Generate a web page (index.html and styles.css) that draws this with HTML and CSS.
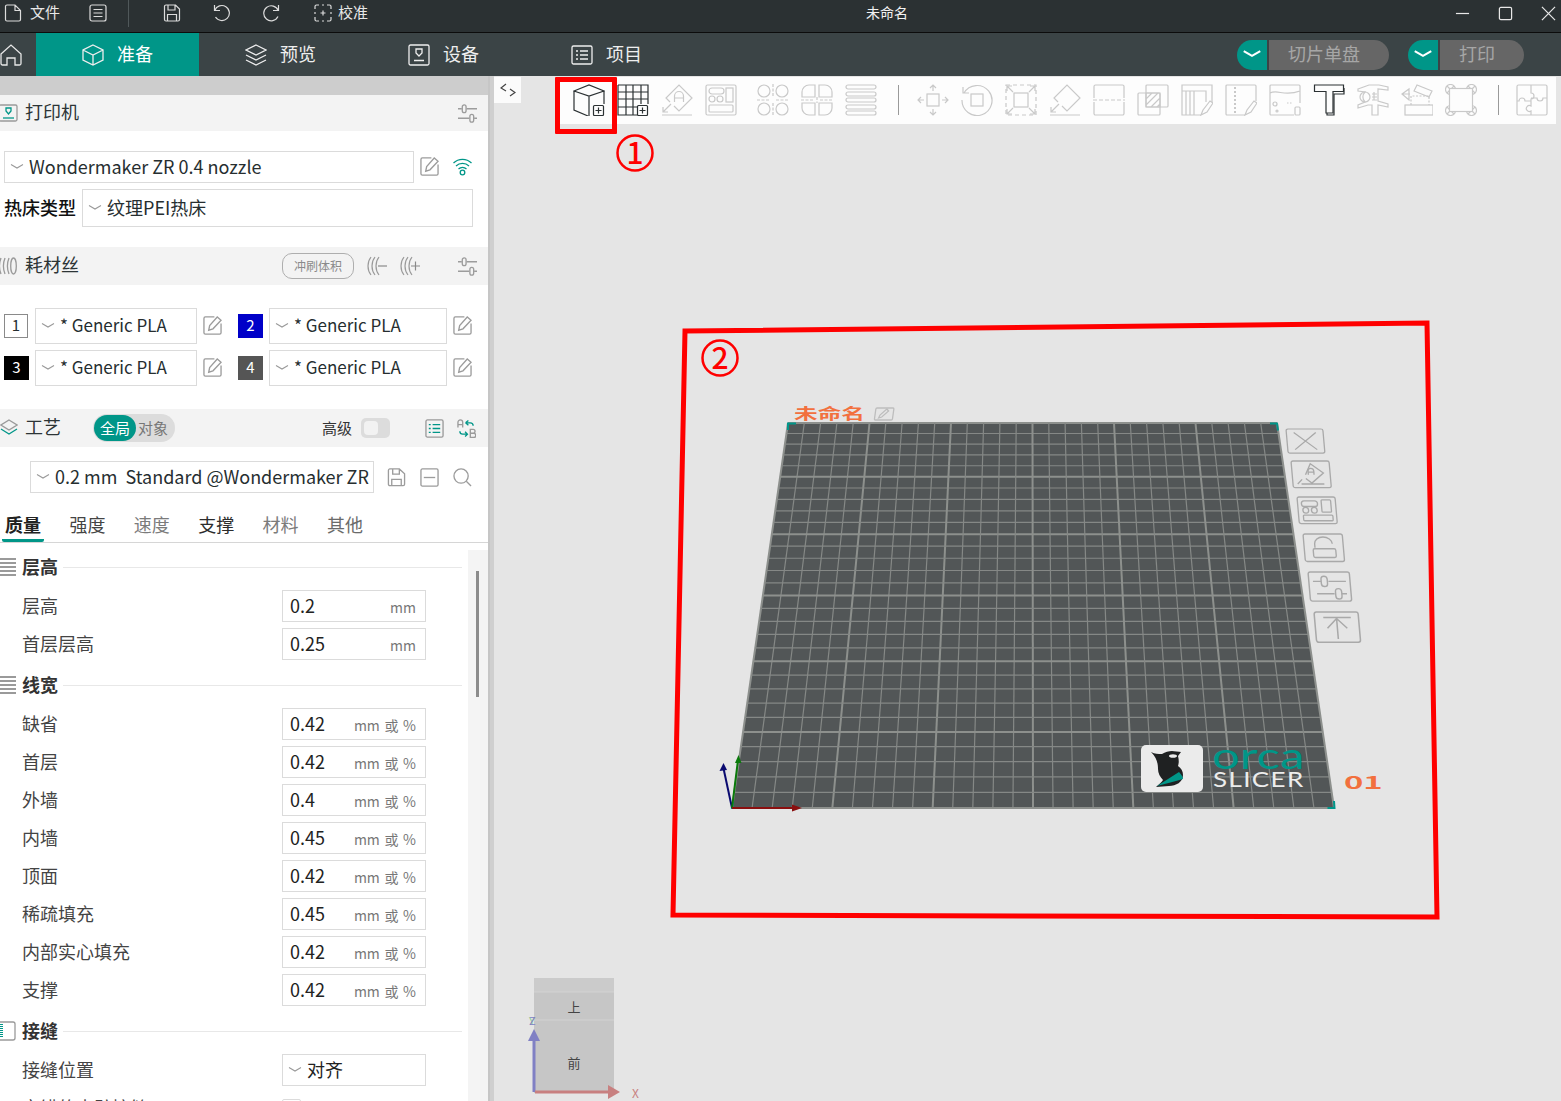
FILE: index.html
```html
<!DOCTYPE html>
<html lang="zh">
<head>
<meta charset="utf-8">
<title>未命名</title>
<link rel="stylesheet" href="styles.css">
</head>
<body>
<svg class="defs" width="0" height="0" aria-hidden="true">
  <defs>
    <symbol id="i-edit" viewBox="0 0 20 20"><path d="M12 1H2.500A1.500 1.500 0 0 0 1 2.500v15A1.500 1.500 0 0 0 2.500 19h15a1.500 1.500 0 0 0 1.500-1.500V8" /><path d="M6 15l1-5 8-9 4 3.500-8.500 9z"/></symbol>
    <symbol id="i-sliders" viewBox="0 0 20 20"><path d="M0 5h4M9 5h11M0 15h12M17 15h3"/><rect x="4.500" y="1" width="4" height="8" rx="2"/><rect x="12.500" y="11" width="4" height="8" rx="2"/></symbol>
    <symbol id="i-chev" viewBox="0 0 14 8"><path d="M1 1.500 7 5l6-3.500"/></symbol>
    <symbol id="t-cube" viewBox="0 0 32 32"><path d="M1 7 16 1l15 6-15 5zM1 7v19l14 6M16 12v20M31 7v13"/><rect x="20.500" y="21.500" width="10" height="10" rx="1"/><path d="M25.500 23.500v6M22.500 26.500h6"/></symbol>
    <symbol id="t-grid" viewBox="0 0 32 32"><path d="M1 1h30v19M20 31H1V1M1 8h30M1 15h30M1 23h19M9 1v30M16 1v30M24 1v19"/><rect x="20.500" y="21.500" width="10" height="10" rx="1"/><path d="M25.500 23.500v6M22.500 26.500h6"/></symbol>
    <symbol id="t-orient" viewBox="0 0 32 32"><path d="M9 18 5 14 18 1l13 13-13 13-5-5M1 31h30M2 28l8-8M2 23v5h5"/><path d="M13.500 18v-6a4.500 4.500 0 0 1 9 0v6M13.500 14h9"/></symbol>
    <symbol id="t-arrange" viewBox="0 0 32 32"><rect x="1" y="1" width="30" height="30" rx="1.500"/><rect x="4" y="4" width="15" height="6" rx="3"/><rect x="21" y="4" width="7" height="14"/><circle cx="7" cy="15" r="3"/><circle cx="15" cy="15" r="3"/><rect x="4" y="21" width="24" height="7" rx="1"/></symbol>
    <symbol id="t-split" viewBox="0 0 32 32"><circle cx="7" cy="7" r="6"/><circle cx="25" cy="7" r="6"/><circle cx="7" cy="25" r="6"/><circle cx="25" cy="25" r="6"/><path d="M16 0v13M16 19v13M0 16h13M19 16h13" stroke-dasharray="3 1.500"/></symbol>
    <symbol id="t-split2" viewBox="0 0 32 32"><path d="M14 1H8a7 7 0 0 0-7 7v5h13zM18 1h6a7 7 0 0 1 7 7v5H18zM14 31H8a7 7 0 0 1-7-7v-5h13zM18 31h6a7 7 0 0 0 7-7v-5H18z"/><path d="M0 16h13M19 16h13M16 13v6" stroke-dasharray="3 1.500"/></symbol>
    <symbol id="t-layers" viewBox="0 0 32 32"><rect x="1" y="1" width="30" height="4" rx="2"/><rect x="1" y="8" width="30" height="4" rx="2"/><rect x="1" y="14" width="30" height="4" rx="2"/><rect x="1" y="21" width="30" height="4" rx="2"/><rect x="1" y="27" width="30" height="4" rx="2"/></symbol>
    <symbol id="t-move" viewBox="0 0 32 32"><rect x="10" y="10" width="12" height="12"/><path d="M16 1v6M13 4l3-3 3 3M16 25v6M13 28l3 3 3-3M1 16h6M4 13l-3 3 3 3M25 16h6M28 13l3 3-3 3"/></symbol>
    <symbol id="t-rotate" viewBox="0 0 32 32"><rect x="10" y="10" width="12" height="12"/><path d="M3 9A15 15 0 1 1 1 16M2 3v6h6" /></symbol>
    <symbol id="t-scale" viewBox="0 0 32 32"><rect x="9" y="9" width="14" height="14"/><path d="M1 1h30v30H1z" stroke-dasharray="4 3"/><path d="M2 2l6 6M2 7V2h5M30 2l-6 6M25 2h5v5M2 30l6-6M2 25v5h5M30 30l-6-6M30 25v5h-5"/></symbol>
    <symbol id="t-flat" viewBox="0 0 32 32"><path d="M9 18 5 14 18 1l13 13-13 13-5-5M1 31h30M2 28l8-8M2 23v5h5"/></symbol>
    <symbol id="t-cut" viewBox="0 0 32 32"><path d="M1 14V2.500A1.500 1.500 0 0 1 2.500 1h27A1.500 1.500 0 0 1 31 2.500V14M1 18v11.500A1.500 1.500 0 0 0 2.500 31h27a1.500 1.500 0 0 0 1.500-1.500V18"/><path d="M0 16h32" stroke-dasharray="4 2"/></symbol>
    <symbol id="t-bool" viewBox="0 0 32 32"><rect x="1" y="9" width="22" height="22" rx="1"/><rect x="9" y="1" width="22" height="22" rx="1"/><path d="M9 23V9h14v14zM9 15l6-6M9 21 21 9M14 23l9-9M20 23l3-3"/></symbol>
    <symbol id="t-support" viewBox="0 0 32 32"><path d="M20 31H1V1h30v17M1 7h24v11M5 7v24M9 7v24M13 7v24"/><path d="M20 31l2-5 7-9 3 2-6 9-6 3z"/></symbol>
    <symbol id="t-seam" viewBox="0 0 32 32"><path d="M20 31H2a1 1 0 0 1-1-1V2a1 1 0 0 1 1-1h28a1 1 0 0 1 1 1v15"/><path d="M10 3v26" stroke-dasharray="2 2" stroke-width="2"/><path d="M20 31l2-5 7-9 3 2-6 9-6 3z"/></symbol>
    <symbol id="t-fuzzy" viewBox="0 0 32 32"><path d="M25 31H2a1 1 0 0 1-1-1V2a1 1 0 0 1 1-1h28a1 1 0 0 1 1 1v17M1 9c8-4 14 4 30-2"/><circle cx="6" cy="20" r="2"/><circle cx="8" cy="27" r="1"/><path d="M18 19h5" stroke-dasharray="1.500 1.500"/><rect x="26" y="23" width="5" height="8" rx="1"/></symbol>
    <symbol id="t-text" viewBox="0 0 32 32"><path d="M1.500 1h29v6.500H20V29h-7V7.500H1.500z"/><path d="M31 4v6H21v21h-7v-2"/></symbol>
    <symbol id="t-measure" viewBox="0 0 32 32"><path d="M1 5 12 1h10l9 2v3l-10-1v12l10 3v3l-10-2v10h-6V21H11L1 24v-3l7-3a7 7 0 0 1 0-10L1 7z"/><circle cx="8" cy="13" r="5"/><path d="M17 8v8M15 10h5M15 13h5M15 16h5"/></symbol>
    <symbol id="t-assembly" viewBox="0 0 32 32"><rect x="4" y="21" width="28" height="10"/><path d="M10 21v-9h18v9" stroke-dasharray="2 1.500"/><path d="M13 7 16 1l15 6-3 6zM1 10l7-5v11zM1 10l8 0"/></symbol>
    <symbol id="t-ears" viewBox="0 0 32 32"><circle cx="5.500" cy="5.500" r="5"/><circle cx="26.500" cy="5.500" r="5"/><circle cx="5.500" cy="26.500" r="5"/><circle cx="26.500" cy="26.500" r="5"/><path d="M2 2l7 7M9 2l-7 7M23 2l7 7M30 2l-7 7M2 23l7 7M9 23l-7 7M23 23l7 7M30 23l-7 7"/><rect x="4.500" y="4.500" width="23" height="23" fill="#fdfdfd"/></symbol>
    <symbol id="t-puzzle" viewBox="0 0 32 32"><rect x="1" y="1" width="30" height="30" rx="1.500"/><path d="M15 1v8a3 3 0 1 1 0 6v2H9a3 3 0 1 0-6 0H1M15 17v5a3 3 0 1 0 0 5v4M15 14h6a3 3 0 1 0 6 0h4"/></symbol>
  </defs>
</svg>

<div class="app">
  <header class="titlebar">
    <div class="tb-left">
      <svg class="tb-ic" viewBox="0 0 18 18"><path d="M1.500 2.500a1.500 1.500 0 0 1 1.500-1.500h8l5.500 5.500v9a1.500 1.500 0 0 1-1.500 1.500H3a1.500 1.500 0 0 1-1.500-1.500zM11 1v5.500h5.500"/></svg>
      <span class="tb-file">文件</span>
      <svg class="tb-ic tb-list" viewBox="0 0 18 18"><rect x="1" y="1" width="16" height="16" rx="2"/><path d="M4.500 5.500h9M4.500 9h9M4.500 12.500h9"/></svg>
      <span class="tb-sep"></span>
      <svg class="tb-ic tb-save" viewBox="0 0 18 18"><path d="M1.500 2.500A1.500 1.500 0 0 1 3 1h9.500l4 4v10.500A1.500 1.500 0 0 1 15 17H3a1.500 1.500 0 0 1-1.500-1.500zM5 1v5h7V1M4.500 17v-6.500h9V17"/></svg>
      <svg class="tb-ic tb-undo" viewBox="0 0 18 18"><path d="M2.500 1v5.500H8M2.800 6.500A7.500 7.500 0 1 1 3.500 13"/></svg>
      <svg class="tb-ic tb-redo" viewBox="0 0 18 18"><path d="M15.500 1v5.500H10M15.200 6.500A7.500 7.500 0 1 0 15 12.500"/></svg>
      <svg class="tb-ic tb-calib" viewBox="0 0 18 18"><path d="M5 1H2.500A1.500 1.500 0 0 0 1 2.500V5M13 1h2.500A1.500 1.500 0 0 1 17 2.500V5M5 17H2.500A1.500 1.500 0 0 1 1 15.500V13M13 17h2.500a1.500 1.500 0 0 0 1.500-1.500V13M8 1h2M8 17h2M1 8v2M17 8v2M9 6.500v5M6.500 9h5"/></svg>
      <span class="tb-calib-label">校准</span>
    </div>
    <div class="tb-title">未命名</div>
    <div class="tb-win">
      <svg class="win-ic" viewBox="0 0 16 16"><path d="M1 8h14"/></svg>
      <svg class="win-ic" viewBox="0 0 16 16"><rect x="1.500" y="1.500" width="13" height="13" rx="1.500"/></svg>
      <svg class="win-ic" viewBox="0 0 16 16"><path d="M1 1l14 14M15 1 1 15"/></svg>
    </div>
  </header>

  <nav class="tabbar">
    <svg class="home" viewBox="0 0 22 22"><path d="M1 10 11 1l10 9v9.500a1.500 1.500 0 0 1-1.500 1.500H15v-7H7v7H2.500A1.500 1.500 0 0 1 1 19.500z"/></svg>
    <div class="tab active">
      <svg class="tab-ic" viewBox="0 0 22 22"><path d="M11 1l10 5v10l-10 5-10-5V6zM1 6l10 5 10-5M11 11v10"/></svg><span>准备</span>
    </div>
    <div class="tab">
      <svg class="tab-ic" viewBox="0 0 22 22"><path d="M11 1l10 5-10 5L1 6zM1 11l10 5 10-5M1 16l10 5 10-5"/></svg><span>预览</span>
    </div>
    <div class="tab">
      <svg class="tab-ic" viewBox="0 0 22 22"><rect x="1" y="1" width="20" height="20" rx="1.500"/><path d="M6 16.500h10M8 5h6v4l-3 3-3-3z"/></svg><span>设备</span>
    </div>
    <div class="tab">
      <svg class="tab-ic" viewBox="0 0 22 22"><rect x="1" y="2" width="20" height="18" rx="1.500"/><path d="M5 7h2M9 7h8M5 11h2M9 11h8M5 15h2M9 15h8"/></svg><span>项目</span>
    </div>
    <div class="actions">
      <div class="act act-slice">
        <span class="act-drop"><svg viewBox="0 0 14 8"><path d="M1 1.500 7 5l6-3.500"/></svg></span>
        <span class="act-main">切片单盘</span>
      </div>
      <div class="act act-print">
        <span class="act-drop"><svg viewBox="0 0 14 8"><path d="M1 1.500 7 5l6-3.500"/></svg></span>
        <span class="act-main">打印</span>
      </div>
    </div>
  </nav>

  <main class="main">
    <aside class="sidebar">
      <div class="band"></div>

      <div class="head head-printer">
        <svg class="head-ic" viewBox="0 0 18 18"><rect x="-1" y="1" width="18" height="16" rx="1.500" class="gr"/><path d="M3 14h11" class="te"/><path d="M6 4h5v3l-2.500 3L6 7z" class="te"/></svg>
        <span class="head-t">打印机</span>
        <svg class="ic ic-right"><use href="#i-sliders"/></svg>
      </div>

      <div class="printer-body">
        <div class="printer-row">
          <div class="sel sel-printer"><svg class="chev"><use href="#i-chev"/></svg><span>Wondermaker ZR 0.4 nozzle</span></div>
          <svg class="ic"><use href="#i-edit"/></svg>
          <svg class="wifi" viewBox="0 0 20 20"><path d="M1 7a13 13 0 0 1 18 0M3.500 10a9.500 9.500 0 0 1 13 0M6 13a6 6 0 0 1 8 0"/><circle cx="10" cy="16.500" r="2.300"/></svg>
        </div>
        <div class="bed-row">
          <span class="bed-label">热床类型</span>
          <div class="sel sel-bed"><svg class="chev"><use href="#i-chev"/></svg><span>纹理PEI热床</span></div>
        </div>
      </div>

      <div class="head">
        <svg class="head-ic" viewBox="0 0 18 18"><path d="M1 1c-2 5-2 11 0 16M5 1c-2 5-2 11 0 16M9 1c-2 5-2 11 0 16" class="gr"/><ellipse cx="13.500" cy="9" rx="2.800" ry="8" class="gr"/></svg>
        <span class="head-t">耗材丝</span>
        <span class="flush">冲刷体积</span>
        <svg class="fil-ic" viewBox="0 0 20 20"><path d="M4 1C0 6 0 14 4 19M8 1C4 6 4 14 8 19M12 1C8 6 8 14 12 19" class="gr"/><path d="M11 10h9"/></svg>
        <svg class="fil-ic fil-ic2" viewBox="0 0 20 20"><path d="M4 1C0 6 0 14 4 19M8 1C4 6 4 14 8 19M12 1C8 6 8 14 12 19" class="gr"/><path d="M11 10h9M15.500 5.500v9"/></svg>
        <svg class="ic ic-right ic-right-f"><use href="#i-sliders"/></svg>
      </div>

      <div class="filaments">
        <div class="fil">
          <span class="num n1">1</span>
          <div class="sel sel-fil"><svg class="chev"><use href="#i-chev"/></svg><span>* Generic PLA</span></div>
          <svg class="ic"><use href="#i-edit"/></svg>
        </div>
        <div class="fil">
          <span class="num n2">2</span>
          <div class="sel sel-fil"><svg class="chev"><use href="#i-chev"/></svg><span>* Generic PLA</span></div>
          <svg class="ic"><use href="#i-edit"/></svg>
        </div>
        <div class="fil">
          <span class="num n3">3</span>
          <div class="sel sel-fil"><svg class="chev"><use href="#i-chev"/></svg><span>* Generic PLA</span></div>
          <svg class="ic"><use href="#i-edit"/></svg>
        </div>
        <div class="fil">
          <span class="num n4">4</span>
          <div class="sel sel-fil"><svg class="chev"><use href="#i-chev"/></svg><span>* Generic PLA</span></div>
          <svg class="ic"><use href="#i-edit"/></svg>
        </div>
      </div>

      <div class="head">
        <svg class="head-ic" viewBox="0 0 18 18"><path d="M9 1l8 5-8 5-8-5z" class="gr"/><path d="M1 10l8 5 8-5" class="te"/></svg>
        <span class="head-t">工艺</span>
        <div class="seg"><span class="seg-on">全局</span><span class="seg-off">对象</span></div>
        <span class="adv">高级</span>
        <span class="switch"><i></i></span>
        <svg class="ic ic-list" viewBox="0 0 20 20"><rect x="1" y="1" width="18" height="18" rx="1.500" class="gr"/><path d="M4 6h2M8 6h8M4 10h2M8 10h8M4 14h2M8 14h8" class="te"/></svg>
        <svg class="ic ic-ab" viewBox="0 0 20 20"><path d="M1 9V3.500a2.500 2.500 0 0 1 5 0V9M1 6h5M14 11h3a2 2 0 0 1 0 4h-3zM14 15h3.500a2.250 2.250 0 0 1 0 4.500H14z" class="gr"/><path d="M9 4l3-2.500M9 4l3 2.500M9 4h5a3 3 0 0 1 3 3M3 13a3 3 0 0 0 3 3h5M8.500 13.500 11 16l-2.500 2.500" class="te"/></svg>
      </div>

      <div class="preset-row">
        <div class="sel sel-preset"><svg class="chev chev-p"><use href="#i-chev"/></svg><span>0.2 mm&nbsp; Standard @Wondermaker ZR</span></div>
        <svg class="ic" viewBox="0 0 20 20"><path d="M1.500 2.500A1.500 1.500 0 0 1 3 1h10l5.500 5v11A1.500 1.500 0 0 1 17 18.500H3A1.500 1.500 0 0 1 1.500 17zM6 1v5.500h7V1M5 18.500V12h10v6.500"/></svg>
        <svg class="ic" viewBox="0 0 20 20"><rect x="1" y="1" width="18" height="18" rx="1.500"/><path d="M4 10h12"/></svg>
        <svg class="ic" viewBox="0 0 20 20"><circle cx="8.500" cy="8.500" r="7.500"/><path d="M14 14l5 5"/></svg>
      </div>

      <div class="tabs">
        <span class="ptab on">质量</span>
        <span class="ptab t2">强度</span>
        <span class="ptab t3">速度</span>
        <span class="ptab t4">支撑</span>
        <span class="ptab t3">材料</span>
        <span class="ptab t5">其他</span>
      </div>

      <div class="scroll">
        <div class="settings">
          <div class="sec">
            <svg class="sec-ic" viewBox="0 0 16 20"><path d="M0 2h16M0 6h16M0 10h16M0 14h16M0 18h16"/></svg>
            <span class="sec-t">层高</span><span class="sec-line"></span>
          </div>
          <div class="row"><span class="lbl">层高</span><div class="field"><b>0.2</b><i>mm</i></div></div>
          <div class="row"><span class="lbl">首层层高</span><div class="field"><b>0.25</b><i>mm</i></div></div>

          <div class="sec sec-next">
            <svg class="sec-ic" viewBox="0 0 16 20"><path d="M0 2h16M0 6h16M0 10h16M0 14h16M0 18h16"/></svg>
            <span class="sec-t">线宽</span><span class="sec-line"></span>
          </div>
          <div class="row"><span class="lbl">缺省</span><div class="field"><b>0.42</b><i>mm 或 %</i></div></div>
          <div class="row"><span class="lbl">首层</span><div class="field"><b>0.42</b><i>mm 或 %</i></div></div>
          <div class="row"><span class="lbl">外墙</span><div class="field"><b>0.4</b><i>mm 或 %</i></div></div>
          <div class="row"><span class="lbl">内墙</span><div class="field"><b>0.45</b><i>mm 或 %</i></div></div>
          <div class="row"><span class="lbl">顶面</span><div class="field"><b>0.42</b><i>mm 或 %</i></div></div>
          <div class="row"><span class="lbl">稀疏填充</span><div class="field"><b>0.45</b><i>mm 或 %</i></div></div>
          <div class="row"><span class="lbl">内部实心填充</span><div class="field"><b>0.42</b><i>mm 或 %</i></div></div>
          <div class="row"><span class="lbl">支撑</span><div class="field"><b>0.42</b><i>mm 或 %</i></div></div>

          <div class="sec sec-next">
            <svg class="sec-ic sec-ic-seam" viewBox="0 0 16 20"><rect x="-2" y="1" width="17" height="18" rx="2"/><path d="M1 3v14" class="te-d"/></svg>
            <span class="sec-t">接缝</span><span class="sec-line"></span>
          </div>
          <div class="row"><span class="lbl">接缝位置</span><div class="field field-sel"><svg class="chev"><use href="#i-chev"/></svg><b>对齐</b></div></div>
          <div class="row"><span class="lbl">交错的内壁接缝</span><span class="check"></span></div>
        </div>
        <div class="track"><span class="thumb"></span></div>
      </div>
    </aside>

    <div class="divider"></div>

    <section class="viewport">
      <svg class="scene" viewBox="0 0 1067 1025" width="1067" height="1025">
        <g transform="translate(-494 -76)">
          <!-- build plate -->
          <polygon points="788,423 1277,423 1334,808 732,808" fill="#525657"/>
          <g id="bed-grid"></g>
          <path d="M788 430v-6.500h8M1270 423.500h7l1 7M1334 801l.5 7h-7M739 808h-7l1-6" fill="none" stroke="#00968a" stroke-width="2"/>

          <text class="plate-name" transform="translate(794 419) scale(1.030 .62)">未命名</text>
          <g transform="translate(875 408) skewX(-8)" fill="none" stroke="#bdbdbd" stroke-width="1.300">
            <rect x="1" y="0" width="18" height="12" rx="1"/><path d="M5 10l1-3 6-6 2 2-6 6z"/>
          </g>

          <!-- plate side buttons -->
          <g class="pbtn" transform="translate(1286 429) skewX(5) scale(.92 .86)"><rect x="0" y="0" width="40" height="28" rx="2"/><path d="M8 4l24 20M32 4 8 24"/></g>
          <g class="pbtn" transform="translate(1291 461) skewX(5) scale(.95 .92)"><rect x="0" y="0" width="40" height="29" rx="2"/><path d="M14 15 20 3l13 10-13 11-6-5M9 25h24M5 25l5-5"/><path d="M17 15v-4a3 3 0 0 1 6 0v4M17 12h6"/></g>
          <g class="pbtn" transform="translate(1297 497) skewX(5) scale(.95 .95)"><rect x="0" y="0" width="40" height="28" rx="2"/><rect x="4" y="4" width="17" height="6" rx="3"/><rect x="25" y="3" width="10" height="13" rx="1"/><circle cx="8" cy="14" r="3"/><circle cx="17" cy="14" r="3"/><rect x="5" y="19" width="31" height="6" rx="1"/></g>
          <g class="pbtn" transform="translate(1303 534) skewX(5) scale(.98 .98)"><rect x="0" y="0" width="40" height="28" rx="2"/><path d="M11 14V10a9 7 0 0 1 18 0"/><rect x="9" y="15" width="23" height="9" rx="1.500"/></g>
          <g class="pbtn" transform="translate(1308 572) skewX(5) scale(1.030 1.040)"><rect x="0" y="0" width="40" height="28" rx="2"/><path d="M4 9h8M19 9h17M7 21h17M31 21h5"/><rect x="12" y="4" width="6" height="10" rx="3"/><rect x="25" y="16" width="6" height="10" rx="3"/></g>
          <g class="pbtn" transform="translate(1314 612) skewX(5) scale(1.100 1.080)"><rect x="0" y="0" width="40" height="28" rx="2"/><path d="M8 5h25M20 25V6M11 15 20 6l9 9"/></g>

          <!-- logo on plate -->
          <rect x="1141" y="745" width="62" height="47" rx="5" fill="#ebebeb"/>
          <path d="M1151 752c4 2 7 2 11 2 3-2 7-3 10-3 2 0 7 1 9 1l-3 4c1 4 1 7 0 10 3 2 5 5 5 9 0 7-7 11-14 11l-13 1c3-3 6-5 7-7-3-3-5-7-5-11 0-5-1-11-7-17z" fill="#1f2122"/>
          <path d="M1157 786l22-14c2 2 4 5 4 7-8 2-17 5-26 7z" fill="#009688"/>
          <ellipse cx="1173" cy="756" rx="4" ry="1.800" fill="#ebebeb"/>
          <text class="logo-orca" transform="translate(1212 769) scale(1.750 1.300)">orca</text>
          <text class="logo-slicer" transform="translate(1213 787) scale(1.370 1.100)">SLICER</text>
          <text class="plate-num" transform="translate(1344 789) scale(2.050 1.050)">01</text>

          <!-- world axes -->
          <path d="M732 808 723 766" stroke="#0a0a70" stroke-width="2" fill="none"/>
          <path d="M719.500 771 723.500 763l3.500 7z" fill="#0a0a70"/>
          <path d="M732 808 738 760" stroke="#0a7a0a" stroke-width="2" fill="none"/>
          <path d="M735 763l3.500-8 3 8z" fill="#0a7a0a"/>
          <path d="M732 808H795" stroke="#8a0f0f" stroke-width="2" fill="none"/>
          <path d="M792 804.500 802 808l-10 3.500z" fill="#8a0f0f"/>

          <!-- view cube -->
          <rect x="534" y="978" width="80" height="115" fill="#c6c6c6"/>
          <rect x="534" y="978" width="80" height="14" fill="#cbcbcb"/>
          <path d="M534 992h80M534 1020h80" stroke="#d2d2d2" fill="none"/>
          <text class="cube-t" x="574" y="1012">上</text>
          <text class="cube-t" x="574" y="1068">前</text>
          <path d="M534 1092V1040" stroke="#8080c4" stroke-width="3" fill="none"/>
          <path d="M528 1041l6-12 6 12z" fill="#8080c4"/>
          <path d="M535 1092h75" stroke="#c88080" stroke-width="3" fill="none"/>
          <path d="M608 1085l12 7-12 7z" fill="#c88080"/>
          <text class="axis-y" x="529" y="1025">Y</text>
          <text class="axis-z" x="529" y="1025">Z</text>
          <text class="axis-x" x="632" y="1098">X</text>

          <!-- annotation frames -->
          <polygon points="685,331 1427,323 1437,917 673,915" fill="none" stroke="#f00" stroke-width="5"/>
          <circle cx="635" cy="153" r="17.500" class="mark-c"/>
          <text class="mark-t" x="635" y="164">1</text>
          <circle cx="720" cy="358" r="17.500" class="mark-c"/>
          <text class="mark-t" x="720" y="369">2</text>
        </g>
      </svg>

      <button class="collapse" type="button"><svg viewBox="0 0 16 14"><path d="M6 1 1 5l5 3M10 6l5 3.500L10 13"/></svg></button>

      <div class="toolbar">
        <svg class="tool on"><use href="#t-cube"/></svg>
        <svg class="tool on"><use href="#t-grid"/></svg>
        <svg class="tool"><use href="#t-orient"/></svg>
        <svg class="tool"><use href="#t-arrange"/></svg>
        <svg class="tool tool-g"><use href="#t-split"/></svg>
        <svg class="tool"><use href="#t-split2"/></svg>
        <svg class="tool"><use href="#t-layers"/></svg>
        <span class="tsep"></span>
        <svg class="tool"><use href="#t-move"/></svg>
        <svg class="tool"><use href="#t-rotate"/></svg>
        <svg class="tool"><use href="#t-scale"/></svg>
        <svg class="tool"><use href="#t-flat"/></svg>
        <svg class="tool"><use href="#t-cut"/></svg>
        <svg class="tool"><use href="#t-bool"/></svg>
        <svg class="tool"><use href="#t-support"/></svg>
        <svg class="tool"><use href="#t-seam"/></svg>
        <svg class="tool"><use href="#t-fuzzy"/></svg>
        <svg class="tool on"><use href="#t-text"/></svg>
        <svg class="tool"><use href="#t-measure"/></svg>
        <svg class="tool"><use href="#t-assembly"/></svg>
        <svg class="tool"><use href="#t-ears"/></svg>
        <span class="tsep tsep2"></span>
        <svg class="tool"><use href="#t-puzzle"/></svg>
      </div>

      <div class="red-box"></div>
    </section>
  </main>
</div>
<script src="grid.js"></script>
</body>
</html>
```

FILE: styles.css
```css
* { box-sizing: border-box; }
html, body { margin: 0; padding: 0; height: 100%; overflow: hidden; }
body {
  font-family: "Noto Sans CJK SC", "Noto Sans", sans-serif;
  color: #262e30;
  background: #fff;
}
.defs { position: absolute; }
svg { display: block; flex: none; }
.app { width: 1561px; height: 1101px; display: flex; flex-direction: column; }

/* title bar */
.titlebar {
  height: 33px; flex: none; display: flex; align-items: center; position: relative; padding-bottom: 6px;
  background: #2b3133; border-bottom: 1px solid #0c0c0c; color: #e8e8e8;
}
.tb-left { display: flex; align-items: center; padding-left: 4px; }
.tb-ic { width: 18px; height: 18px; fill: none; stroke: #dcdcdc; stroke-width: 1.200; }
.tb-file { font-size: 15px; margin-left: 8px; line-height: 20px; padding-bottom: 2px; }
.tb-list { margin-left: 29px; }
.tb-sep { width: 1px; height: 28px; background: #50585a; margin-left: 21px; }
.tb-save { margin-left: 34px; }
.tb-undo { margin-left: 31px; }
.tb-redo { margin-left: 33px; }
.tb-calib { margin-left: 33px; }
.tb-calib-label { font-size: 15px; margin-left: 6px; line-height: 20px; padding-bottom: 2px; }
.tb-title { position: absolute; left: 866px; top: 2px; font-size: 14px; line-height: 20px; color: #f2f2f2; }
.tb-win { margin-left: auto; display: flex; gap: 28px; padding-right: 5px; }
.win-ic { width: 15px; height: 15px; fill: none; stroke: #e8e8e8; stroke-width: 1.300; }

/* main tabs */
.tabbar { height: 43px; flex: none; display: flex; align-items: center; background: #3b4446; color: #eee; }
.home { width: 22px; height: 22px; margin: 0 14px 0 0; fill: none; stroke: #e8e8e8; stroke-width: 1.300; }
.tab { width: 163px; height: 43px; display: flex; align-items: center; justify-content: center; gap: 13px; font-size: 18px; }
.tab span { padding-bottom: 4px; }
.tab.active { background: #009688; color: #fff; }
.tab-ic { width: 22px; height: 22px; fill: none; stroke: #eee; stroke-width: 1.300; }
.actions { margin-left: auto; display: flex; gap: 19px; padding-right: 37px; }
.act { display: flex; height: 30px; font-size: 18px; color: #a6a6a6; }
.act-drop { width: 30px; background: #009688; border-radius: 15px 0 0 15px; display: flex; align-items: center; justify-content: center; }
.act-drop svg { width: 20px; height: 11px; fill: none; stroke: #fff; stroke-width: 1.500; }
.act-main { background: #666; margin-left: 2px; border-radius: 0 15px 15px 0; display: flex; align-items: center; justify-content: center; line-height: 26px; padding: 0 10px 4px 0; }
.act-slice .act-main { width: 120px; }
.act-print .act-main { width: 84px; }

/* layout */
.main { flex: 1; display: flex; min-height: 0; }
.sidebar { width: 488px; flex: none; display: flex; flex-direction: column; overflow: hidden; background: #fff; }
.divider { width: 6px; flex: none; background: linear-gradient(90deg, #c6c6c6 0 2px, #cfcfcf 2px); }
.band { height: 19px; flex: none; background: #cdcdcd; }

/* section headers */
.head { height: 38px; flex: none; display: flex; align-items: center; background: #f3f3f3; position: relative; }
.head-printer { height: 36px; }
.head-ic { width: 18px; height: 18px; fill: none; stroke-width: 1.300; overflow: hidden; }
.gr { fill: none; stroke: #9a9a9a; }
.te { fill: none; stroke: #009688; }
.te-d { stroke: #009688; stroke-width: 4; stroke-dasharray: 1 1; }
.head-t { font-size: 18px; margin-left: 7px; line-height: 24px; color: #2c3436; padding-bottom: 5px; }
.ic { width: 19px; height: 19px; fill: none; stroke: #9c9c9c; stroke-width: 1.400; }
.ic-right { margin-left: auto; margin-right: 11px; }
.ic-right-f { margin-left: 38px; }
.flush {
  width: 72px; height: 26px; border: 1px solid #aeaeae; border-radius: 10px; padding-bottom: 1px;
  font-size: 12px; color: #8a8a8a; display: flex; align-items: center; justify-content: center; background: #f3f3f3;
}
.head .flush { margin-left: 203px; }
.fil-ic { width: 20px; height: 20px; margin-left: 13px; fill: none; stroke: #8a8a8a; stroke-width: 1.200; }

/* selects */
.sel { display: flex; align-items: center; border: 1px solid #dbdbdb; background: #fff; white-space: nowrap; overflow: hidden; }
.sel span { padding-bottom: 3px; }
.chev { width: 14px; height: 8px; flex: none; fill: none; stroke: #9a9a9a; stroke-width: 1.100; margin: 0 5px 0 5px; }
.chev-p { margin-right: 5px; }

.printer-body { padding: 20px 15px 20px 4px; display: flex; flex-direction: column; gap: 6px; }
.printer-row { display: flex; align-items: center; }
.sel-printer { width: 410px; height: 32px; font-size: 18px; }
.printer-row .ic { margin: 0 0 2px 6px; }
.wifi { width: 21px; height: 20px; margin: 0 0 3px 13px; fill: none; stroke: #009688; stroke-width: 1.300; }
.bed-row { display: flex; align-items: center; }
.bed-label { width: 78px; font-size: 18px; font-weight: 500; color: #111; line-height: 24px; padding-bottom: 2px; white-space: nowrap; }
.sel-bed { width: 391px; height: 38px; font-size: 18px; }

/* filaments */
.filaments { padding: 23px 16px 23px 4px; display: grid; grid-template-columns: 234px 234px; row-gap: 6px; }
.fil { display: flex; align-items: center; height: 36px; }
.num { width: 24px; height: 24px; font-size: 15px; line-height: 20px; padding-bottom: 3px; display: flex; align-items: center; justify-content: center; flex: none; }
.n1 { border: 1px solid #8a8a8a; }
.n2 { background: #0000c8; color: #fff; width: 25px; }
.n3 { background: #000; color: #fff; width: 25px; }
.n4 { background: #555; color: #fff; width: 25px; }
.sel-fil { width: 162px; height: 36px; font-size: 17px; margin-left: 7px; }
.fil .ic { margin: 0 0 2px 6px; }
.fil:nth-child(even) .sel-fil { width: 178px; margin-left: 6px; }
.fil:nth-child(3) .sel-fil { margin-left: 6px; }

/* process */
.seg { margin-left: 32px; width: 82px; height: 28px; border-radius: 14px; background: #dcdcdc; display: flex; align-items: center; padding-left: 1px; font-size: 15px; }
.seg-on { width: 42px; height: 26px; border-radius: 13px; background: #009688; color: #fff; display: flex; align-items: center; justify-content: center; padding-bottom: 2px; }
.seg-off { color: #777; margin-left: 2px; padding-bottom: 2px; }
.adv { margin-left: 147px; font-size: 15px; color: #333; width: 39px; padding-bottom: 2px; }
.switch { width: 29px; height: 20px; border-radius: 5px; background: #dcdcdc; padding: 3px; display: block; }
.switch i { display: block; width: 14px; height: 14px; border-radius: 4px; background: #f2f2f2; }
.ic-list { margin-left: 35px; }
.ic-ab { margin-left: 13px; }

.preset-row { display: flex; align-items: center; padding: 14px 0 0 30px; flex: none; }
.sel-preset { width: 344px; height: 32px; font-size: 18px; }
.preset-row .ic { margin-left: 14px; }
.preset-row .ic:first-of-type { margin-left: 13px; }

/* tabs */
.tabs { height: 50px; flex: none; display: flex; border-bottom: 1px solid #d6d6d6; padding: 18px 0 0 2px; gap: 22.400px; position: relative; }
.ptab { width: 42px; text-align: center; font-size: 18px; line-height: 26px; height: 31px; color: #444; }
.ptab.on { font-weight: 700; color: #222; border-bottom: 3px solid #009688; border-radius: 0 0 2px 2px; }
.ptab.t3 { color: #7b7b7b; }
.ptab.t4 { color: #2c2c2c; }
.ptab.t5 { color: #6a6a6a; }

/* settings */
.scroll { flex: 1; display: flex; min-height: 0; }
.settings { width: 468px; padding-top: 4px; flex: none; }
.sec { height: 40px; display: flex; align-items: center; }
.sec-next { margin-top: 2px; }
.sec-ic { width: 16px; height: 20px; fill: none; stroke: #9a9a9a; stroke-width: 2; margin-right: 6px; }
.sec-ic-seam { stroke-width: 1.300; }
.sec-t { font-size: 18px; font-weight: 700; color: #333; line-height: 24px; width: 36px; flex: none; padding-bottom: 2px; }
.sec-line { width: 399px; height: 1px; background: #e8e8e8; margin-left: 5px; }
.row { height: 38px; display: flex; align-items: center; padding-left: 22px; }
.lbl { width: 260px; flex: none; font-size: 18px; color: #444; line-height: 24px; padding-bottom: 2px; white-space: nowrap; }
.field { width: 144px; height: 32px; border: 1px solid #dbdbdb; display: flex; align-items: center; padding: 0 9px 0 7px; }
.field b { font-weight: 400; font-size: 18px; color: #222; padding-bottom: 3px; }
.field i { font-style: normal; font-size: 14px; word-spacing: 1.500px; color: #777; margin-left: auto; padding-top: 2px; }
.field-sel { padding-left: 0; }
.field-sel .chev { margin-right: 5px; }
.check { width: 19px; height: 19px; border: 1px solid #dbdbdb; border-radius: 2px; }
.track { width: 20px; flex: none; margin-top: 7px; background: #f4f4f4; position: relative; }
.thumb { display: block; width: 3px; height: 126px; background: #8c8c8c; margin: 21px 0 0 8px; }

/* viewport */
.viewport { flex: 1; position: relative; background: #e5e5e5; overflow: hidden; }
.scene { position: absolute; left: 0; top: 0; }
.collapse { position: absolute; left: 0; top: 1px; width: 27px; height: 26px; padding: 0; border: 0; background: #fbfbfb; display: flex; align-items: center; justify-content: center; }
.collapse svg { width: 16px; height: 14px; fill: none; stroke: #444; stroke-width: 1.200; }
.toolbar { position: absolute; left: 63px; top: 1px; width: 999px; height: 47px; background: #fdfdfd; display: flex; align-items: flex-start; gap: 12px; padding: 7px 0 0 16px; }
.tool { width: 32px; height: 32px; fill: none; stroke: #c9c9c9; stroke-width: 1.200; }
.tool.on { stroke: #2b3133; }
.tool-g { margin-left: 8px; }
.tsep { width: 1px; height: 30px; flex: none; background: #9a9a9a; margin: 1px 6px 0 9px; }
.tsep2 { margin: 1px 5px 0 9px; }
.red-box { position: absolute; left: 61px; top: 1px; width: 62px; height: 57px; border: 5px solid #f00; border-radius: 1px; }

/* scene text */
.plate-name { font-size: 23px; font-weight: 700; fill: #f2703e; }
.plate-num { font-size: 16px; font-weight: 700; fill: #f2703e; }
.pbtn { fill: none; stroke: #a9a9a9; stroke-width: 1.400; }
.logo-orca { font-size: 28px; font-family: "Lato", sans-serif; font-weight: 400; fill: #009688; }
.logo-slicer { font-size: 19px; font-family: "Lato", sans-serif; font-weight: 400; fill: #ececec; letter-spacing: 1px; }
.cube-t { font-size: 13px; text-anchor: middle; fill: #444; }
.axis-z { font-size: 11px; fill: #8080c4; }
.axis-y { font-size: 11px; fill: #8ccf8c; }
.axis-x { font-size: 12px; fill: #c88080; }
.mark-c { fill: none; stroke: #f00; stroke-width: 2.500; }
.mark-t { font-size: 30px; font-weight: 500; fill: #f00; text-anchor: middle; }
```

FILE: grid.js
```js
// Draws the 30 x 30 perspective grid of the build plate.
(function () {
  var NS = 'http://www.w3.org/2000/svg';
  var g = document.getElementById('bed-grid');
  var topY = 423, botY = 808, tl = 788, tr = 1277, bl = 732, br = 1334;
  var w0 = tr - tl, w1 = br - bl, n = 30;
  function add(x1, y1, x2, y2, major) {
    var l = document.createElementNS(NS, 'line');
    l.setAttribute('x1', x1); l.setAttribute('y1', y1);
    l.setAttribute('x2', x2); l.setAttribute('y2', y2);
    l.setAttribute('stroke', major ? '#8d908d' : '#858886');
    l.setAttribute('stroke-width', major ? 2 : 1.2);
    g.appendChild(l);
  }
  for (var i = 0; i <= n; i++) {
    var t = i / n, major = i % 5 === 0;
    var y = topY + (botY - topY) * (t * w0) / ((1 - t) * w1 + t * w0);
    var f = (y - topY) / (botY - topY);
    add(tl + (bl - tl) * f, y, tr + (br - tr) * f, y, major);
    add(tl + w0 * t, topY, bl + w1 * t, botY, major);
  }
})();
```
